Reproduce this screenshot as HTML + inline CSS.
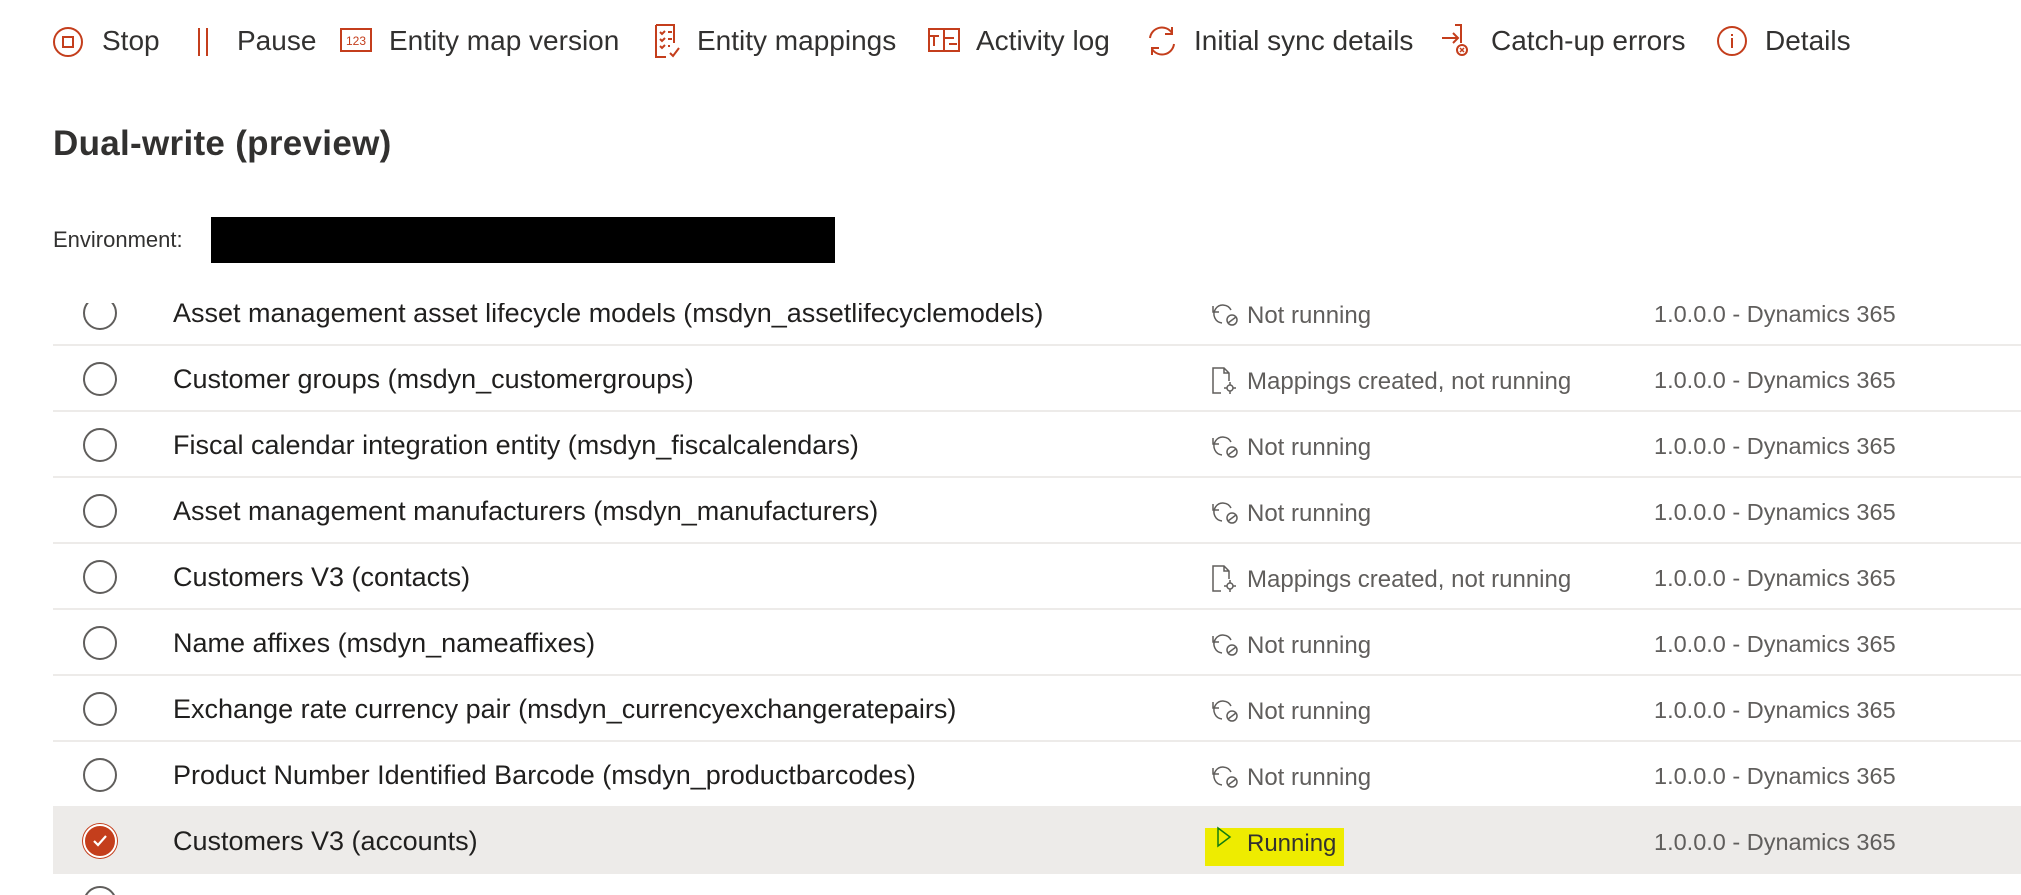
<!DOCTYPE html>
<html><head><meta charset="utf-8"><style>
*{margin:0;padding:0;box-sizing:border-box}
html,body{width:2021px;height:895px;overflow:hidden}
body{background:#fff;font-family:"Liberation Sans",sans-serif;color:#323130;position:relative}
.a{position:absolute;white-space:nowrap}
.tb{top:24px;font-size:28px;color:#323130;line-height:34px}
.ic{position:absolute}
.row{position:absolute;left:53px;width:1968px;height:66px;border-bottom:2px solid #edebe9}
.rad{position:absolute;left:30px;top:16px;width:34px;height:34px;border:2px solid #605e5c;border-radius:50%}
.nm{position:absolute;left:120px;top:16px;font-size:27px;color:#201f1e;line-height:34px}
.st{position:absolute;left:1194px;top:20px;font-size:24px;color:#605e5c;line-height:32px}
.sti{position:absolute;left:1158px;top:21px}
.ver{position:absolute;left:1601px;top:17px;font-size:23.5px;color:#605e5c;line-height:34px}
</style></head><body>

<svg class="ic" style="left:52px;top:26px" width="32" height="32" viewBox="0 0 32 32" fill="none" stroke="#c43e1c" stroke-width="2"><circle cx="16" cy="16" r="14"/><rect x="11" y="11" width="10" height="10"/></svg>
<div class="a tb" style="left:102px">Stop</div>
<svg class="ic" style="left:196px;top:28px" width="14" height="28" fill="none" stroke="#c43e1c" stroke-width="2"><line x1="3" y1="0" x2="3" y2="28"/><line x1="11" y1="0" x2="11" y2="28"/></svg>
<div class="a tb" style="left:237px">Pause</div>
<svg class="ic" style="left:340px;top:28px" width="32" height="24" viewBox="0 0 32 24"><rect x="1" y="1" width="30" height="22" fill="none" stroke="#c43e1c" stroke-width="2"/><text x="16" y="17" font-size="12" font-family="Liberation Sans" fill="#c43e1c" text-anchor="middle">123</text></svg>
<div class="a tb" style="left:389px">Entity map version</div>
<svg class="ic" style="left:654px;top:24px" width="28" height="34" viewBox="0 0 28 34" fill="none" stroke="#c43e1c" stroke-width="2"><path d="M2 1h18v18M2 1v32h10"/><path d="M6 8l2 2 3-3M14 8h4M6 15l2 2 3-3M14 15h4M6 22l2 2 3-3M14 22h2M16 29l3 3 6-8"/></svg>
<div class="a tb" style="left:697px">Entity mappings</div>
<svg class="ic" style="left:928px;top:28px" width="32" height="24" viewBox="0 0 32 24" fill="none" stroke="#c43e1c" stroke-width="2"><rect x="1" y="1" width="30" height="22"/><path d="M1 8h10M16 1v22M16 10h10M6 8v10M21 16h8"/></svg>
<div class="a tb" style="left:976px">Activity log</div>
<svg class="ic" style="left:1145px;top:24px" width="34" height="34" viewBox="0 0 34 34" fill="none" stroke="#c43e1c" stroke-width="2"><path d="M5 14A12 12 0 0 1 27 9M29 20A12 12 0 0 1 7 25"/><path d="M27 3v7h-7M7 31v-7h7"/></svg>
<div class="a tb" style="left:1194px">Initial sync details</div>
<svg class="ic" style="left:1441px;top:24px" width="34" height="34" viewBox="0 0 34 34" fill="none" stroke="#c43e1c" stroke-width="2"><path d="M1 14h16M12 9l5 5-5 5M14 1h6v18"/><circle cx="21" cy="26" r="5"/><path d="M19 24l4 4M23 24l-4 4" stroke-width="1.5"/></svg>
<div class="a tb" style="left:1491px">Catch-up errors</div>
<svg class="ic" style="left:1716px;top:25px" width="32" height="32" viewBox="0 0 32 32" fill="none" stroke="#c43e1c" stroke-width="2"><circle cx="16" cy="16" r="14"/><path d="M16 13v10M16 9v2"/></svg>
<div class="a tb" style="left:1765px">Details</div>

<div class="a" style="left:53px;top:124px;font-size:35px;font-weight:bold;color:#323130;letter-spacing:0.3px">Dual-write (preview)</div>
<div class="a" style="left:53px;top:227px;font-size:22px;color:#323130">Environment:</div>
<div class="a" style="left:211px;top:217px;width:624px;height:46px;background:#000"></div>

<div class="a" style="left:0;top:303px;width:2021px;height:44px;overflow:hidden">
<div class="row" style="top:-23px"><div class="rad"></div><div class="nm">Asset management asset lifecycle models (msdyn_assetlifecyclemodels)</div><svg class="sti" width="30" height="26" viewBox="0 0 30 26" fill="none" stroke="#605e5c" stroke-width="1.5"><path d="M11 22A9 9 0 1 1 20 9M2 5v6h6"/><circle cx="21" cy="19" r="5"/><path d="M17 22l8-6"/></svg><div class="st">Not running</div><div class="ver">1.0.0.0 - Dynamics 365</div></div>
</div>

<div class="row" style="top:346px"><div class="rad"></div><div class="nm">Customer groups (msdyn_customergroups)</div><svg class="sti" width="30" height="28" viewBox="0 0 30 28" fill="none" stroke="#605e5c" stroke-width="1.5"><path d="M10 26H2V1h11l5 5v8M13 1v5h5"/><circle cx="19" cy="21" r="3"/><path d="M19 15v3M19 24v3M13 21h3M22 21h3"/></svg><div class="st">Mappings created, not running</div><div class="ver">1.0.0.0 - Dynamics 365</div></div>

<div class="row" style="top:412px"><div class="rad"></div><div class="nm">Fiscal calendar integration entity (msdyn_fiscalcalendars)</div><svg class="sti" width="30" height="26" viewBox="0 0 30 26" fill="none" stroke="#605e5c" stroke-width="1.5"><path d="M11 22A9 9 0 1 1 20 9M2 5v6h6"/><circle cx="21" cy="19" r="5"/><path d="M17 22l8-6"/></svg><div class="st">Not running</div><div class="ver">1.0.0.0 - Dynamics 365</div></div>

<div class="row" style="top:478px"><div class="rad"></div><div class="nm">Asset management manufacturers (msdyn_manufacturers)</div><svg class="sti" width="30" height="26" viewBox="0 0 30 26" fill="none" stroke="#605e5c" stroke-width="1.5"><path d="M11 22A9 9 0 1 1 20 9M2 5v6h6"/><circle cx="21" cy="19" r="5"/><path d="M17 22l8-6"/></svg><div class="st">Not running</div><div class="ver">1.0.0.0 - Dynamics 365</div></div>

<div class="row" style="top:544px"><div class="rad"></div><div class="nm">Customers V3 (contacts)</div><svg class="sti" width="30" height="28" viewBox="0 0 30 28" fill="none" stroke="#605e5c" stroke-width="1.5"><path d="M10 26H2V1h11l5 5v8M13 1v5h5"/><circle cx="19" cy="21" r="3"/><path d="M19 15v3M19 24v3M13 21h3M22 21h3"/></svg><div class="st">Mappings created, not running</div><div class="ver">1.0.0.0 - Dynamics 365</div></div>

<div class="row" style="top:610px"><div class="rad"></div><div class="nm">Name affixes (msdyn_nameaffixes)</div><svg class="sti" width="30" height="26" viewBox="0 0 30 26" fill="none" stroke="#605e5c" stroke-width="1.5"><path d="M11 22A9 9 0 1 1 20 9M2 5v6h6"/><circle cx="21" cy="19" r="5"/><path d="M17 22l8-6"/></svg><div class="st">Not running</div><div class="ver">1.0.0.0 - Dynamics 365</div></div>

<div class="row" style="top:676px"><div class="rad"></div><div class="nm">Exchange rate currency pair (msdyn_currencyexchangeratepairs)</div><svg class="sti" width="30" height="26" viewBox="0 0 30 26" fill="none" stroke="#605e5c" stroke-width="1.5"><path d="M11 22A9 9 0 1 1 20 9M2 5v6h6"/><circle cx="21" cy="19" r="5"/><path d="M17 22l8-6"/></svg><div class="st">Not running</div><div class="ver">1.0.0.0 - Dynamics 365</div></div>

<div class="row" style="top:742px"><div class="rad"></div><div class="nm">Product Number Identified Barcode (msdyn_productbarcodes)</div><svg class="sti" width="30" height="26" viewBox="0 0 30 26" fill="none" stroke="#605e5c" stroke-width="1.5"><path d="M11 22A9 9 0 1 1 20 9M2 5v6h6"/><circle cx="21" cy="19" r="5"/><path d="M17 22l8-6"/></svg><div class="st">Not running</div><div class="ver">1.0.0.0 - Dynamics 365</div></div>

<div class="row" style="top:808px;background:#edebe9"><div class="rad" style="background:#c43e1c;border:2px solid #fff;box-shadow:0 0 0 1px #c43e1c"><svg width="30" height="30" viewBox="0 0 30 30" style="position:absolute;left:0;top:0"><path d="M9 15l4 4 8-9" fill="none" stroke="#fff" stroke-width="2.2"/></svg></div><div class="nm">Customers V3 (accounts)</div>
<div style="position:absolute;left:1152px;top:20px;width:139px;height:38px;background:#eeec00"></div>
<svg class="sti" width="30" height="26" viewBox="0 0 30 26" style="left:1163px;top:18px"><path d="M2 2l12 9-12 9z" fill="none" stroke="#107c10" stroke-width="1.5"/></svg>
<div class="st" style="color:#323130">Running</div><div class="ver">1.0.0.0 - Dynamics 365</div></div>

<div class="row" style="top:874px;height:21px;border:none;overflow:hidden"><div class="rad" style="top:12px"></div></div>

</body></html>
